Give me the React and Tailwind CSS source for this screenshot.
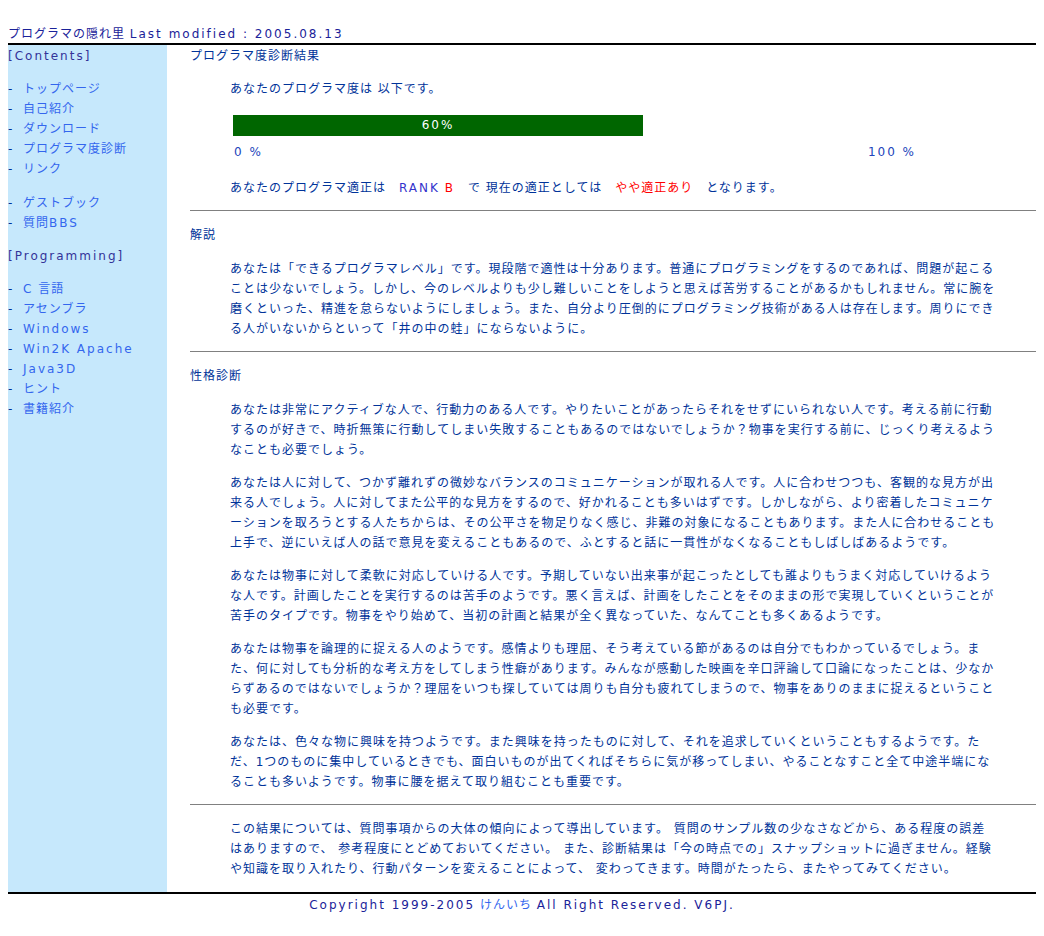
import React from "react";

const font = { fontFamily: '"DejaVu Sans", Verdana, "Noto Sans CJK JP", sans-serif' };

// Latin runs in the reference are spaced wider than the kana
const L = ({ children }) => <span className="tracking-[2px]">{children}</span>;

const contents = [
  ["トップページ", "自己紹介", "ダウンロード", "プログラマ度診断", "リンク"],
  ["ゲストブック", <>質問<L>BBS</L></>],
];

const programming = [
  <><L>C</L> 言語</>,
  "アセンブラ",
  <L>Windows</L>,
  <L>Win2K Apache</L>,
  <L>Java3D</L>,
  "ヒント",
  "書籍紹介",
];

const SideLink = ({ label }) => (
  <div className="h-5 leading-5 flex">
    <span className="text-[#003399] w-[15px]">-</span>
    <a className="text-[#3366ee]">{label}</a>
  </div>
);

const Para = ({ children, className = "" }) => (
  <p className={"pl-10 pr-10 leading-5 " + className}>{children}</p>
);

const personality = [
  "あなたは非常にアクティブな人で、行動力のある人です。やりたいことがあったらそれをせずにいられない人です。考える前に行動するのが好きで、時折無策に行動してしまい失敗することもあるのではないでしょうか？物事を実行する前に、じっくり考えるようなことも必要でしょう。",
  "あなたは人に対して、つかず離れずの微妙なバランスのコミュニケーションが取れる人です。人に合わせつつも、客観的な見方が出来る人でしょう。人に対してまた公平的な見方をするので、好かれることも多いはずです。しかしながら、より密着したコミュニケーションを取ろうとする人たちからは、その公平さを物足りなく感じ、非難の対象になることもあります。また人に合わせることも上手で、逆にいえば人の話で意見を変えることもあるので、ふとすると話に一貫性がなくなることもしばしばあるようです。",
  "あなたは物事に対して柔軟に対応していける人です。予期していない出来事が起こったとしても誰よりもうまく対応していけるような人です。計画したことを実行するのは苦手のようです。悪く言えば、計画をしたことをそのままの形で実現していくということが苦手のタイプです。物事をやり始めて、当初の計画と結果が全く異なっていた、なんてことも多くあるようです。",
  "あなたは物事を論理的に捉える人のようです。感情よりも理屈、そう考えている節があるのは自分でもわかっているでしょう。また、何に対しても分析的な考え方をしてしまう性癖があります。みんなが感動した映画を辛口評論して口論になったことは、少なからずあるのではないでしょうか？理屈をいつも探していては周りも自分も疲れてしまうので、物事をありのままに捉えるということも必要です。",
  "あなたは、色々な物に興味を持つようです。また興味を持ったものに対して、それを追求していくということもするようです。ただ、1つのものに集中しているときでも、面白いものが出てくればそちらに気が移ってしまい、やることなすこと全て中途半端になることも多いようです。物事に腰を据えて取り組むことも重要です。",
];

export default function App() {
  return (
    <div className="bg-white w-[1044px] min-h-[936px] px-2 pt-[26px] text-[12px] tracking-[1px] text-[#003399]" style={font}>
      <div className="h-[17px] leading-[16px] text-[#1a2299] border-b-2 border-black box-content">
        プログラマの隠れ里 <L>Last modified : 2005.08.13</L>
      </div>
      <div className="flex">
        <div className="w-[159px] shrink-0 bg-[#c6e8fc] pt-[1px]">
          <div className="h-5 leading-5 text-[#333399]"><L>[Contents]</L></div>
          <div className="mt-[13px]">
            {contents[0].map((l, i) => <SideLink key={i} label={l} />)}
          </div>
          <div className="mt-[14px]">
            {contents[1].map((l, i) => <SideLink key={i} label={l} />)}
          </div>
          <div className="h-5 leading-5 text-[#333399] mt-[13px]"><L>[Programming]</L></div>
          <div className="mt-[13px]">
            {programming.map((l, i) => <SideLink key={i} label={l} />)}
          </div>
        </div>
        <div className="flex-1 pl-[23px] pt-[1px] pb-[13px]">
          <div className="h-5 leading-5">プログラマ度診断結果</div>
          <Para className="mt-[13px]">あなたのプログラマ度は 以下です。</Para>
          <div className="pl-[43px] mt-[16px]">
            <div className="w-[683px]">
              <div className="w-[410px] h-[21px] bg-[#006600] text-white text-center leading-[21px]"><L>60%</L></div>
              <div className="flex justify-between mt-[6px] h-5 leading-5 text-[#2244bb] pl-[1px]">
                <L>0 %</L>
                <L>100 %</L>
              </div>
            </div>
          </div>
          <Para className="mt-[16px]">
            あなたのプログラマ適正は　<span className="text-[#3333cc]"><L>RANK</L></span> <span className="text-[#ff0000]"><L>B</L></span>　で 現在の適正としては　<span className="text-[#ff0000]">やや適正あり</span>　となります。
          </Para>
          <div className="border-t border-[#808080] mt-[12px]" />
          <div className="h-5 leading-5 mt-[14px]">解説</div>
          <Para className="mt-[14px]">
            あなたは「できるプログラマレベル」です。現段階で適性は十分あります。普通にプログラミングをするのであれば、問題が起こることは少ないでしょう。しかし、今のレベルよりも少し難しいことをしようと思えば苦労することがあるかもしれません。常に腕を磨くといった、精進を怠らないようにしましょう。また、自分より圧倒的にプログラミング技術がある人は存在します。周りにできる人がいないからといって「井の中の蛙」にならないように。
          </Para>
          <div className="border-t border-[#808080] mt-[12px]" />
          <div className="h-5 leading-5 mt-[14px]">性格診断</div>
          <div className="mt-[14px] flex flex-col gap-[13px]">
            {personality.map((t, i) => <Para key={i}>{t}</Para>)}
          </div>
          <div className="border-t border-[#808080] mt-[12px]" />
          <Para className="mt-[14px]">
            この結果については、質問事項からの大体の傾向によって導出しています。 質問のサンプル数の少なさなどから、ある程度の誤差はありますので、 参考程度にとどめておいてください。 また、診断結果は「今の時点での」スナップショットに過ぎません。経験や知識を取り入れたり、行動パターンを変えることによって、 変わってきます。時間がたったら、またやってみてください。
          </Para>
        </div>
      </div>
      <div className="border-t-2 border-black text-center h-5 leading-5 pt-[1px] text-[#1a2299] box-content">
        <L>Copyright 1999-2005</L> <a className="text-[#3366ee]">けんいち</a> <L>All Right Reserved. V6PJ.</L>
      </div>
    </div>
  );
}
